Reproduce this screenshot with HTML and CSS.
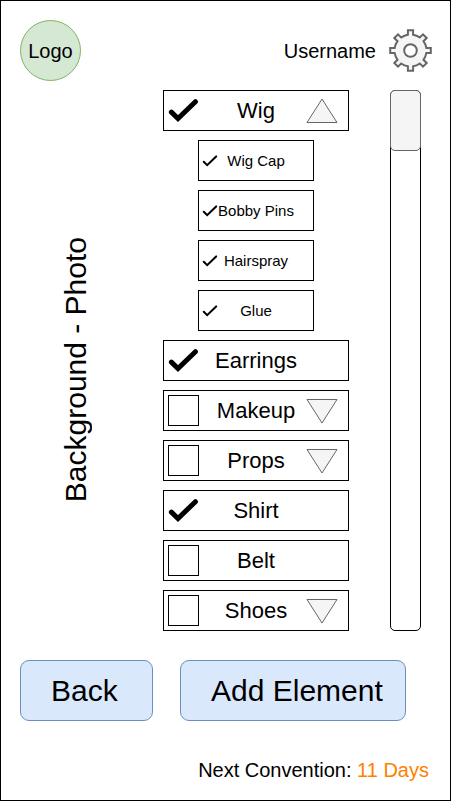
FILE: index.html
```html
<!DOCTYPE html>
<html lang="en">
<head>
<meta charset="utf-8">
<meta name="viewport" content="width=device-width, initial-scale=1">
<title>Costume checklist</title>
<link rel="stylesheet" href="styles.css">
</head>
<body>
<svg class="defs" aria-hidden="true">
  <symbol id="check" viewBox="0 0 31 24"><path d="M3.4 13.6 10 20 27.4 3.2"/></symbol>
  <symbol id="triangle" viewBox="0 0 32 26"><path d="M1 1.500H31L16 25Z"/></symbol>
</svg>
<div class="screen">
  <header class="header">
    <div class="logo">Logo</div>
    <div class="account">
      <span>Username</span>
      <button class="settings" type="button" aria-label="Settings">
        <svg viewBox="0 0 43 43" aria-hidden="true">
          <path d="M18.9 1.2H24.1V5.7A16 16 0 0 1 30.8 8.5L34 5.3L37.7 9L34.5 12.2A16 16 0 0 1 37.3 18.9H41.8V24.1H37.3A16 16 0 0 1 34.5 30.8L37.7 34L34 37.7L30.8 34.5A16 16 0 0 1 24.1 37.3V41.8H18.9V37.3A16 16 0 0 1 12.2 34.5L9 37.7L5.3 34L8.5 30.8A16 16 0 0 1 5.7 24.1H1.2V18.9H5.7A16 16 0 0 1 8.5 12.2L5.3 9L9 5.3L12.2 8.5A16 16 0 0 1 18.9 5.7Z"/>
          <circle cx="21.5" cy="21.5" r="6.3"/>
        </svg>
      </button>
    </div>
  </header>

  <main class="main">
    <div class="photo">Background - Photo</div>
    <ul class="list">
      <li class="item">
        <input type="checkbox" id="wig" checked><svg class="check" aria-hidden="true"><use href="#check"/></svg>
        <label for="wig">Wig</label>
        <button class="toggle open" type="button" aria-label="Collapse Wig"><svg aria-hidden="true"><use href="#triangle"/></svg></button>
      </li>
      <li class="item sub">
        <input type="checkbox" id="cap" checked><svg class="check" aria-hidden="true"><use href="#check"/></svg>
        <label for="cap">Wig Cap</label>
      </li>
      <li class="item sub">
        <input type="checkbox" id="pins" checked><svg class="check" aria-hidden="true"><use href="#check"/></svg>
        <label for="pins">Bobby Pins</label>
      </li>
      <li class="item sub">
        <input type="checkbox" id="hairspray" checked><svg class="check" aria-hidden="true"><use href="#check"/></svg>
        <label for="hairspray">Hairspray</label>
      </li>
      <li class="item sub">
        <input type="checkbox" id="glue" checked><svg class="check" aria-hidden="true"><use href="#check"/></svg>
        <label for="glue">Glue</label>
      </li>
      <li class="item">
        <input type="checkbox" id="earrings" checked><svg class="check" aria-hidden="true"><use href="#check"/></svg>
        <label for="earrings">Earrings</label>
      </li>
      <li class="item">
        <input type="checkbox" id="makeup"><svg class="check" aria-hidden="true"><use href="#check"/></svg>
        <label for="makeup">Makeup</label>
        <button class="toggle" type="button" aria-label="Expand Makeup"><svg aria-hidden="true"><use href="#triangle"/></svg></button>
      </li>
      <li class="item">
        <input type="checkbox" id="props"><svg class="check" aria-hidden="true"><use href="#check"/></svg>
        <label for="props">Props</label>
        <button class="toggle" type="button" aria-label="Expand Props"><svg aria-hidden="true"><use href="#triangle"/></svg></button>
      </li>
      <li class="item">
        <input type="checkbox" id="shirt" checked><svg class="check" aria-hidden="true"><use href="#check"/></svg>
        <label for="shirt">Shirt</label>
      </li>
      <li class="item">
        <input type="checkbox" id="belt"><svg class="check" aria-hidden="true"><use href="#check"/></svg>
        <label for="belt">Belt</label>
      </li>
      <li class="item">
        <input type="checkbox" id="shoes"><svg class="check" aria-hidden="true"><use href="#check"/></svg>
        <label for="shoes">Shoes</label>
        <button class="toggle" type="button" aria-label="Expand Shoes"><svg aria-hidden="true"><use href="#triangle"/></svg></button>
      </li>
    </ul>
    <div class="scrollbar"><div class="thumb"></div></div>
  </main>

  <div class="actions">
    <button class="action" type="button">Back</button>
    <button class="action" type="button">Add Element</button>
  </div>

  <footer class="footer">Next Convention: <span class="days">11 Days</span></footer>
</div>
</body>
</html>
```
FILE: styles.css
```css
* {
  box-sizing: border-box;
}

body {
  margin: 0;
  background: #fff;
  color: #000;
  font: 20px/24px "Liberation Sans", Arial, sans-serif;
}

button {
  padding: 0;
  border: 0;
  background: none;
  color: inherit;
  font: inherit;
  cursor: pointer;
}

svg {
  display: block;
}

.defs {
  display: none;
}

.screen {
  display: flex;
  flex-direction: column;
  min-height: 100vh;
  margin-right: 19px;
  padding: 19px 18px 18px 19px;
  border: 1px solid #000;
}

.header {
  display: flex;
  align-items: center;
  justify-content: space-between;
}

.logo {
  display: grid;
  place-items: center;
  width: 61px;
  height: 61px;
  border: 1px solid #82b366;
  border-radius: 50%;
  background: #d5e8d4;
}

.account {
  display: flex;
  align-items: center;
  gap: 13px;
}

.settings svg {
  width: 43px;
  height: 43px;
  fill: #f5f5f5;
  stroke: #666;
  stroke-width: 2;
}

.settings circle {
  fill: #fff;
}

.main {
  display: grid;
  grid-template-columns: 1fr 186px 72px;
  margin-top: 9px;
  padding-right: 11px;
}

.photo {
  place-self: center;
  padding-bottom: 18px;
  margin-right: 32px;
  font-size: 30px;
  line-height: 36px;
  writing-mode: vertical-rl;
  transform: rotate(180deg);
}

.list {
  display: flex;
  flex-direction: column;
  align-items: center;
  gap: 9px;
  margin: 0;
  padding: 0;
  list-style: none;
}

.item {
  display: grid;
  grid-template-columns: 42px 1fr 42px;
  align-items: center;
  width: 100%;
  height: 41px;
  border: 1px solid #000;
  font-size: 22px;
  text-align: center;
}

.item input,
.item .check {
  grid-area: 1 / 1;
  width: 31px;
  height: 31px;
  margin: 0 0 0 4px;
}

.item input {
  appearance: none;
  border: 1px solid #000;
}

.item input:checked {
  border-color: transparent;
}

.item .check {
  visibility: hidden;
  fill: none;
  stroke: #000;
  stroke-width: 5;
  stroke-linecap: round;
  pointer-events: none;
}

.item input:checked + .check {
  visibility: visible;
}

.item label {
  grid-area: 1 / 2;
}

.item.sub {
  grid-template-columns: 19px 1fr 19px;
  width: 116px;
  font-size: 15px;
}

.sub input,
.sub .check {
  width: 16px;
  height: 16px;
  margin-left: 3px;
}

.item.sub .check {
  stroke-width: 4;
}

.toggle {
  grid-area: 1 / 3;
  justify-self: end;
  margin-right: 10px;
}

.toggle svg {
  width: 32px;
  height: 26px;
  fill: #f5f5f5;
  stroke: #666;
}

.open svg {
  transform: scaleY(-1);
}

.scrollbar {
  margin-left: 41px;
  border: 1px solid #000;
  border-radius: 5px;
}

.thumb {
  height: 61px;
  margin: -1px;
  border: 1px solid #666;
  border-radius: 5px;
  background: #f5f5f5;
}

.actions {
  display: grid;
  grid-template-columns: 133fr 226fr;
  gap: 27px;
  margin-top: 29px;
  padding-right: 26px;
}

.action {
  height: 61px;
  padding-left: 30px;
  border: 1px solid #6c8ebf;
  border-radius: 9px;
  background: #dae8fc;
  font-size: 30px;
  line-height: 36px;
  text-align: left;
}

.footer {
  margin-top: auto;
  padding-right: 3px;
  text-align: right;
}

.days {
  color: #ff8000;
}
```
